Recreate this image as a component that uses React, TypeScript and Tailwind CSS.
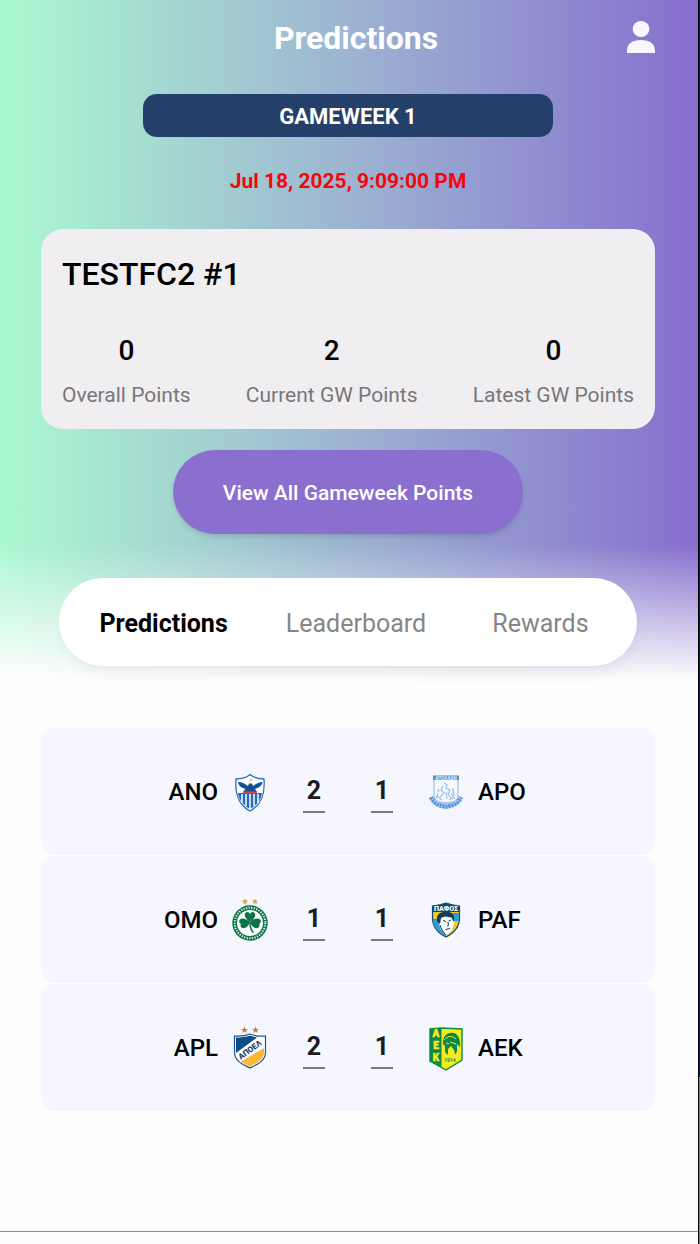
import { useState } from "react";
import type { ReactNode } from "react";

type Team = {
  code: string;
  name: string;
  crest: ReactNode;
};

type Match = {
  id: number;
  home: Team;
  away: Team;
  score: [string, string];
};

const STAR = "M0-3.2 .9-1 3.2-1 1.4.5 2.1 2.8 0 1.4-2.1 2.8-1.4.5-3.2-1-.9-1z";

function AnoCrest() {
  return (
    <svg viewBox="0 0 40 48" className="h-[48px] w-[40px]" aria-hidden="true">
      <path
        d="M6 11C10 11 16 10 20 6.500C24 10 30 11 34 11C35 24 33 36 20 43C7 36 5 24 6 11Z"
        fill="#fdfdff"
        stroke="#2c6db5"
        strokeWidth="1.300"
      />
      <path
        d="M8 25H32C31 32 27 37 20 41C13 37 9 32 8 25Z"
        fill="#1f6cc0"
      />
      <path
        d="M12 26V35M16 26V38M20 26V41M24 26V38M28 26V35"
        stroke="#fff"
        strokeWidth="1.500"
      />
      <path
        d="M8 14C12 14 15 16 18 18L19 15.500L22 15.500L23 18C26 16 29 14 32.500 14C32 18 28 20 25 21L27 24H13L15.500 21C12 20 8.500 18 8 14Z"
        fill="#184f93"
      />
      <path d="M13 24.500H27" stroke="#d8474f" strokeWidth="2" />
      <path d="M19 12.500L22 10.500L22 13Z" fill="#e0b24a" />
    </svg>
  );
}

function ApoCrest() {
  return (
    <svg viewBox="0 0 40 48" className="h-[48px] w-[40px]" aria-hidden="true">
      <path
        d="M8 9H32V27C32 32 27 36 20 38C13 36 8 32 8 27Z"
        fill="#f4f8ff"
        stroke="#8db5df"
        strokeWidth="1"
      />
      <path d="M7 7.500H33V12H7Z" fill="#4f8fd0" />
      <text
        x="20"
        y="11.500"
        textAnchor="middle"
        fontSize="4.500"
        fontWeight="700"
        fill="#dcecff"
        className="font-['Roboto',sans-serif]"
      >
        ΑΠΟΛΛΩΝ
      </text>
      <path
        d="M18 15L21 17L20 20L24 22L22 26L25 30M17 18L15 22L18 25L14 29M12 25L10 30M27 20L28 28M20 24L21 31M13 21L12 24M25 25L29 31M11 28L16 32M23 32L28 29"
        fill="none"
        stroke="#9dbde3"
        strokeWidth="1.200"
      />
      <path
        d="M5 29C8 36 15 38.500 20 38.500C25 38.500 32 36 35 29"
        fill="none"
        stroke="#5c97d3"
        strokeWidth="4.500"
        strokeDasharray="2.500 .5"
      />
      <path
        d="M9 32C13 36 27 36 31 32"
        fill="none"
        stroke="#a3c5ea"
        strokeWidth="2"
      />
    </svg>
  );
}

function OmoCrest() {
  return (
    <svg viewBox="0 0 40 48" className="h-[48px] w-[40px]" aria-hidden="true">
      <path d={STAR} transform="translate(15 5.500)" fill="#cda94c" />
      <path d={STAR} transform="translate(25 5.500)" fill="#cda94c" />
      <circle cx="20" cy="27" r="17.700" fill="#0b7345" />
      <circle
        cx="20"
        cy="27"
        r="15.300"
        fill="none"
        stroke="#e5f3eb"
        strokeWidth="2"
        strokeDasharray="1.300 1.300"
      />
      <circle cx="20" cy="27" r="13" fill="#fff" />
      <g fill="#0b7345">
        <path d="M20 26C15.500 23 13 18.500 16 16.500C17.800 15.500 19.300 16.500 20 18C20.700 16.500 22.200 15.500 24 16.500C27 18.500 24.500 23 20 26Z" />
        <path d="M20 26.500C16 22 10.500 21 9.300 24.500C8.800 26.300 9.700 27.500 11 28C10 29 10.300 31 11.800 31.800C15.200 33.300 18.500 30 20 26.500Z" />
        <path d="M20 26.500C24 22 29.500 21 30.700 24.500C31.200 26.300 30.300 27.500 29 28C30 29 29.700 31 28.200 31.800C24.800 33.300 21.500 30 20 26.500Z" />
        <path d="M19.300 26H20.700C20.700 30 21.500 33.500 24 36L22.500 37C19.800 34 19.300 30 19.300 26Z" />
      </g>
    </svg>
  );
}

function PafCrest() {
  return (
    <svg viewBox="0 0 40 48" className="h-[48px] w-[40px]" aria-hidden="true">
      <path
        d="M6.500 10C11 9.500 16 8.500 20 7C24 8.500 29 9.500 33.500 10V22C33.500 31 28 37 20 41C12 37 6.500 31 6.500 22Z"
        fill="#f5c62a"
        stroke="#12496b"
        strokeWidth="1.200"
      />
      <path
        d="M7 23H14L15 33L20 40C12 36.500 7 31 7 23ZM26 17H33V25H27Z"
        fill="#2a9fd0"
      />
      <path
        d="M13 20L25 18L27.500 22L28 28L26 34L20 39.500L14.500 33L13 28Z"
        fill="#fff"
      />
      <path
        d="M11 22C11 17.500 16 15 23 16C27.500 17 29 21 27.500 26L25.500 21.500L19 20.500L15 22L14 28C11.500 27 10.500 25 11 22Z"
        fill="#123c5a"
      />
      <path
        d="M17 24.500L20 25.500M22.500 25L25 24M22 26L22.500 29.500L21 30M19.500 33.500L24 32.500M14 29L15.500 33L20 39.500"
        fill="none"
        stroke="#123c5a"
        strokeWidth="1"
      />
      <path
        d="M6.500 10C11 9.500 16 8.500 20 7C24 8.500 29 9.500 33.500 10V16H6.500Z"
        fill="#0d4b74"
      />
      <text
        x="20"
        y="15"
        textAnchor="middle"
        fontSize="7"
        fontWeight="900"
        fill="#fff"
        className="font-['Roboto',sans-serif]"
      >
        ΠΑΦΟΣ
      </text>
    </svg>
  );
}

function AplCrest() {
  return (
    <svg viewBox="0 0 40 48" className="h-[48px] w-[40px]" aria-hidden="true">
      <path d={STAR} transform="translate(14.500 6) scale(1.100)" fill="#b88a2c" />
      <path d={STAR} transform="translate(25.500 6) scale(1.100)" fill="#b88a2c" />
      <path
        d="M4.500 12C10 12.500 15 12 20 10C25 12 30 12.500 35.500 12V28C35.500 37 28 40 20 44C12 40 4.500 37 4.500 28Z"
        fill="#fff"
        stroke="#1a5794"
        strokeWidth="1.200"
      />
      <path
        d="M6 13.500C11 13.500 16 13 20 11.500C23 12.700 25 13 27 13.500L6 29Z"
        fill="#0f4c8a"
      />
      <path
        d="M34 24V28C34 35.500 28 38.500 20 42.500C16 40.500 13 39.500 11 37.500Z"
        fill="#f9b934"
      />
      <text
        x="20"
        y="28.500"
        textAnchor="middle"
        fontSize="8"
        fontWeight="900"
        fill="#143f6e"
        transform="rotate(-36 20 26)"
        className="font-['Roboto',sans-serif]"
      >
        ΑΠΟΕΛ
      </text>
    </svg>
  );
}

function AekCrest() {
  return (
    <svg viewBox="0 0 40 48" className="h-[48px] w-[40px]" aria-hidden="true">
      <path
        d="M4 5L15 4L36 5V36L20 46L4 37Z"
        fill="#f6ea22"
        stroke="#0a8a48"
        strokeWidth="1.400"
      />
      <path d="M4 5L15.500 4V43L4 37Z" fill="#0a8a48" />
      <g
        fontSize="10"
        fontWeight="900"
        fill="#f6ea22"
        stroke="#f6ea22"
        strokeWidth=".4"
        textAnchor="middle"
        className="font-['Roboto',sans-serif]"
      >
        <text x="10" y="13">A</text>
        <text x="10" y="25">E</text>
        <text x="10" y="37">K</text>
      </g>
      <path
        d="M17 20C16 12 22 7.500 28 9C33 10.500 34.500 17 34 23L31 20L31 27L29.500 31L28 26L25 22L22 25V31L19 28V22Z"
        fill="#0a8a48"
      />
      <path
        d="M18 16C21 12 26 11 30 15M24 18L30 20M20 19L23 20"
        fill="none"
        stroke="#f6ea22"
        strokeWidth="1"
      />
      <text
        x="24"
        y="38"
        textAnchor="middle"
        fontSize="5"
        fontWeight="700"
        fill="#0a8a48"
        className="font-['Roboto',sans-serif]"
      >
        1914
      </text>
    </svg>
  );
}

const STATS = [
  { label: "Overall Points", value: 0 },
  { label: "Current GW Points", value: 2 },
  { label: "Latest GW Points", value: 0 },
];

const TABS = ["Predictions", "Leaderboard", "Rewards"];

const MATCHES: Match[] = [
  {
    id: 1,
    home: { code: "ANO", name: "Anorthosis", crest: <AnoCrest /> },
    away: { code: "APO", name: "Apollon", crest: <ApoCrest /> },
    score: ["2", "1"],
  },
  {
    id: 2,
    home: { code: "OMO", name: "Omonia", crest: <OmoCrest /> },
    away: { code: "PAF", name: "Pafos", crest: <PafCrest /> },
    score: ["1", "1"],
  },
  {
    id: 3,
    home: { code: "APL", name: "Apoel", crest: <AplCrest /> },
    away: { code: "AEK", name: "AEK", crest: <AekCrest /> },
    score: ["2", "1"],
  },
];

function ScoreInput({ label, initial }: { label: string; initial: string }) {
  const [value, setValue] = useState(initial);

  return (
    <input
      aria-label={label}
      inputMode="numeric"
      maxLength={2}
      value={value}
      onChange={e => setValue(e.target.value.replace(/\D/g, ""))}
      className="h-[42px] w-[22px] border-b-2 border-[#77777d] bg-transparent text-center text-[25px] font-bold text-[#1c1c1e] outline-none"
    />
  );
}

function MatchRow({ match }: { match: Match }) {
  const { home, away, score } = match;

  return (
    <li className="flex h-[127px] items-center justify-center rounded-xl bg-[#f6f7fe]">
      <div className="flex flex-1 items-center justify-end gap-3">
        <span>{home.code}</span>
        {home.crest}
      </div>
      <div className="flex gap-[46px] px-[33px]">
        <ScoreInput label={`${home.name} goals`} initial={score[0]} />
        <ScoreInput label={`${away.name} goals`} initial={score[1]} />
      </div>
      <div className="flex flex-1 items-center gap-3">
        {away.crest}
        <span>{away.code}</span>
      </div>
    </li>
  );
}

export default function App() {
  const [activeTab, setActiveTab] = useState("Predictions");

  return (
    <div className="flex min-h-screen bg-[#fefefe] font-['Roboto',sans-serif] text-black">
      <div className="flex flex-1 flex-col border-r border-black">
        {/* Gradient header, fading out behind the tabs */}
        <div className="bg-linear-to-r from-[#abf9d0] via-[#9cb4d1] to-[#876ecd]">
          <div className="bg-linear-to-b from-transparent from-[545px] to-[#fefefe] to-[682px]">
            <header className="grid h-[76px] grid-cols-[1fr_auto_1fr] items-center pr-[42px] pl-[56px]">
              <h1 className="col-start-2 text-[32px] font-bold text-white">
                Predictions
              </h1>
              <button aria-label="Profile" className="justify-self-end">
                <svg
                  viewBox="0 0 30 34"
                  className="h-[34px] w-[30px] fill-[#f8f7fe]"
                >
                  <ellipse cx="15" cy="8" rx="8.300" ry="8" />
                  <path d="M1 32V29.500C1 23 6.500 19 15 19S29 23 29 29.500V32Z" />
                </svg>
              </button>
            </header>

            <div className="flex flex-col items-center pt-[18px] pr-[43px] pl-[41px]">
              <div className="flex h-[43px] w-2/3 items-center justify-center rounded-[14px] bg-[#243f69] pt-px text-[22px] font-bold text-white">
                GAMEWEEK 1
              </div>
              <time
                dateTime="2025-07-18T21:09:00"
                className="mt-7 text-[21px] leading-8 font-bold text-[#f5060a]"
              >
                Jul 18, 2025, 9:09:00 PM
              </time>

              <section className="mt-8 h-[200px] w-full rounded-[22px] bg-[#f0eef0] px-[21px] pt-[25px]">
                <h2 className="text-[32px] leading-10 font-medium">
                  TESTFC2 #1
                </h2>
                <dl className="mt-[37px] flex justify-between">
                  {STATS.map(stat => (
                    <div
                      key={stat.label}
                      className="flex flex-col-reverse items-center gap-2"
                    >
                      <dt className="text-[21px] leading-8 text-[#77777b]">
                        {stat.label}
                      </dt>
                      <dd className="text-[28px] leading-10 font-medium">
                        {stat.value}
                      </dd>
                    </div>
                  ))}
                </dl>
              </section>

              <button className="mt-[21px] h-[84px] rounded-full bg-[#8a6fcf] px-[50px] pt-1 text-[21px] font-medium text-white shadow-md">
                View All Gameweek Points
              </button>

              <nav className="mt-[44px] flex h-[88px] w-[94%] items-center justify-between rounded-full bg-white px-8 pt-1 shadow-lg shadow-black/5">
                {TABS.map(tab => (
                  <button
                    key={tab}
                    onClick={() => setActiveTab(tab)}
                    className={
                      tab === activeTab
                        ? "px-2 text-[25px] font-bold text-black"
                        : "px-4 text-[25px] text-[#868688]"
                    }
                  >
                    {tab}
                  </button>
                ))}
              </nav>
            </div>
            <div className="h-[62px]" />
          </div>
        </div>

        <ul className="flex flex-1 flex-col gap-px pr-[43px] pl-[41px] text-[24px] font-medium">
          {MATCHES.map(match => (
            <MatchRow key={match.id} match={match} />
          ))}
        </ul>

        <footer className="h-[13px] border-t border-[#8e8e90]" />
      </div>
      <div className="w-px bg-linear-to-b from-[#0b1a4a] from-[1077px] to-[#8a8a8a] to-[1077px]" />
    </div>
  );
}
